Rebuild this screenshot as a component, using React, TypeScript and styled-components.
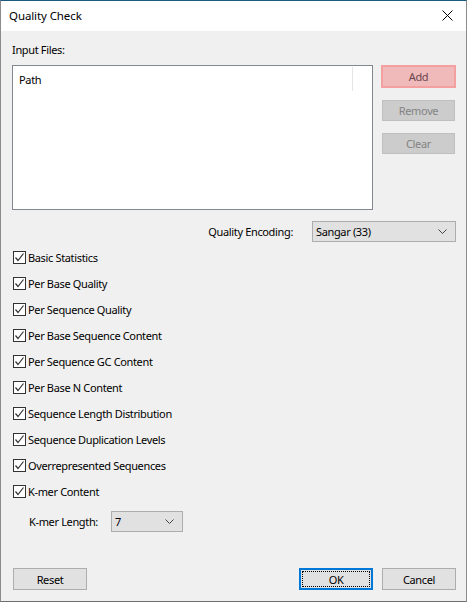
import React from "react";
import styled, { createGlobalStyle } from "styled-components";

const Global = createGlobalStyle`
  html, body { margin: 0; padding: 0; background: #f0f0f0; }
  body { font-family: "Noto Sans", "Roboto", sans-serif; font-size: 11px; letter-spacing: -0.35px; color: #000; }
  * { box-sizing: border-box; }
`;

const Window = styled.div`
  width: 467px;
  height: 602px;
  display: flex;
  flex-direction: column;
  background: #f0f0f0;
  border-left: 1px solid #8c8c8c;
  border-right: 1px solid #8c8c8c;
  border-top: 1px solid #1c5b7c;
  border-bottom: 1px solid #6f6f6f;
  overflow: hidden;
`;

const TitleBar = styled.div`
  height: 30px;
  flex: none;
  background: #fff;
  display: flex;
  align-items: center;
  justify-content: space-between;
  padding: 0 9px 1px 8px;
`;

const Title = styled.span`
  font-size: 11.5px;
  line-height: 16px;
  letter-spacing: -0.1px;
  color: #000;
`;

const CloseBox = styled.div`
  width: 20px;
  height: 20px;
  display: flex;
  align-items: center;
  justify-content: center;
`;

const Body = styled.div`
  flex: 1;
  display: flex;
  flex-direction: column;
  padding: 11px 10px 11px 11px;
`;

const Label = styled.span`
  line-height: 15px;
  white-space: nowrap;
`;

const TopSection = styled.div`
  display: flex;
  align-items: flex-start;
  margin-top: 8px;
`;

const ListBox = styled.div`
  width: 361px;
  height: 145px;
  background: #fff;
  border: 1px solid #828790;
  flex: none;
`;

const ListHeader = styled.div`
  height: 26px;
  display: flex;
  align-items: center;
  padding-left: 6px;
  position: relative;
`;

const HeaderSep = styled.div`
  position: absolute;
  left: 339px;
  top: 1px;
  width: 1px;
  height: 24px;
  background: #e5e5e5;
`;

const ButtonColumn = styled.div`
  display: flex;
  flex-direction: column;
  margin-left: 8px;
  gap: 12px;
`;

const Button = styled.div<{ $variant?: "normal" | "disabled" | "hot" | "default" }>`
  width: 74px;
  height: 22px;
  display: flex;
  align-items: center;
  justify-content: center;
  line-height: 15px;
  position: relative;
  border: 1px solid
    ${(p) =>
      p.$variant === "disabled" ? "#bfbfbf" : p.$variant === "hot" ? "#f4a0a0" : p.$variant === "default" ? "#0078d7" : "#adadad"};
  background: ${(p) => (p.$variant === "disabled" ? "#cccccc" : p.$variant === "hot" ? "#f0baba" : "#e1e1e1")};
  color: ${(p) => (p.$variant === "disabled" ? "#838383" : p.$variant === "hot" ? "#6b4650" : "#000")};
  ${(p) => (p.$variant === "hot" ? "border-width: 2px;" : "")}
  ${(p) => (p.$variant === "default" ? "border-width: 2px;" : "")}
`;

const AddButton = styled(Button)`
  width: 75px;
  height: 23px;
`;

const SideButton = styled(Button)`
  margin-left: 1px;
  width: 73px;
  height: 21px;
`;

const FocusRect = styled.div`
  position: absolute;
  inset: 1px;
  border: 1px dotted #000;
`;

const EncodingRow = styled.div`
  display: flex;
  justify-content: flex-end;
  align-items: center;
  margin-top: 11px;
`;

const Combo = styled.div<{ $width: number }>`
  width: ${(p) => p.$width}px;
  height: 21px;
  background: #e1e1e1;
  border: 1px solid #adadad;
  display: flex;
  align-items: center;
  justify-content: space-between;
  padding: 0 8px 0 3px;
  line-height: 15px;
`;

const EncodingCombo = styled(Combo)`
  margin-left: 19px;
`;

const CheckList = styled.div`
  display: flex;
  flex-direction: column;
  margin-top: 2px;
`;

const CheckRow = styled.div`
  height: 26px;
  display: flex;
  align-items: center;
  gap: 2px;
  padding-left: 1px;
`;

const Box = styled.span`
  width: 13px;
  height: 13px;
  border: 1px solid #333;
  background: #fff;
  display: flex;
  align-items: center;
  justify-content: center;
  flex: none;
`;

const KmerRow = styled.div`
  display: flex;
  align-items: center;
  margin-top: 7px;
  padding-left: 17px;
`;

const KmerLabel = styled(Label)`
  width: 82px;
`;

const Footer = styled.div`
  margin-top: auto;
  display: flex;
  align-items: center;
  padding-left: 1px;
`;

const Spacer = styled.div`
  flex: 1;
`;

const FooterGap = styled.div`
  width: 9px;
`;

const Chevron = () => (
  <svg width="9" height="5" viewBox="0 0 9 5">
    <path d="M0.5 0.5 L4.5 4.5 L8.5 0.5" fill="none" stroke="#444" strokeWidth="1" />
  </svg>
);

const Check = () => (
  <svg width="11" height="11" viewBox="0 0 11 11">
    <path d="M1.5 5.5 L4 8.5 L9.5 1.5" fill="none" stroke="#333" strokeWidth="1.2" />
  </svg>
);

const items = [
  "Basic Statistics",
  "Per Base Quality",
  "Per Sequence Quality",
  "Per Base Sequence Content",
  "Per Sequence GC Content",
  "Per Base N Content",
  "Sequence Length Distribution",
  "Sequence Duplication Levels",
  "Overrepresented Sequences",
  "K-mer Content",
];

export default function App() {
  return (
    <>
      <Global />
      <Window>
        <TitleBar>
          <Title>Quality Check</Title>
          <CloseBox>
            <svg width="11" height="11" viewBox="0 0 11 11">
              <path d="M0.5 0.5 L10.5 10.5 M10.5 0.5 L0.5 10.5" stroke="#000" strokeWidth="1" />
            </svg>
          </CloseBox>
        </TitleBar>
        <Body>
          <Label>Input Files:</Label>
          <TopSection>
            <ListBox>
              <ListHeader>
                <Label>Path</Label>
                <HeaderSep />
              </ListHeader>
            </ListBox>
            <ButtonColumn>
              <AddButton $variant="hot">Add</AddButton>
              <SideButton $variant="disabled">Remove</SideButton>
              <SideButton $variant="disabled">Clear</SideButton>
            </ButtonColumn>
          </TopSection>
          <EncodingRow>
            <Label>Quality Encoding:</Label>
            <EncodingCombo $width={144}>
              <span>Sangar (33)</span>
              <Chevron />
            </EncodingCombo>
          </EncodingRow>
          <CheckList>
            {items.map((t) => (
              <CheckRow key={t}>
                <Box>
                  <Check />
                </Box>
                <Label>{t}</Label>
              </CheckRow>
            ))}
          </CheckList>
          <KmerRow>
            <KmerLabel>K-mer Length:</KmerLabel>
            <Combo $width={72}>
              <span>7</span>
              <Chevron />
            </Combo>
          </KmerRow>
          <Footer>
            <Button>Reset</Button>
            <Spacer />
            <Button $variant="default">
              <FocusRect />
              OK
            </Button>
            <FooterGap />
            <Button>Cancel</Button>
          </Footer>
        </Body>
      </Window>
    </>
  );
}
